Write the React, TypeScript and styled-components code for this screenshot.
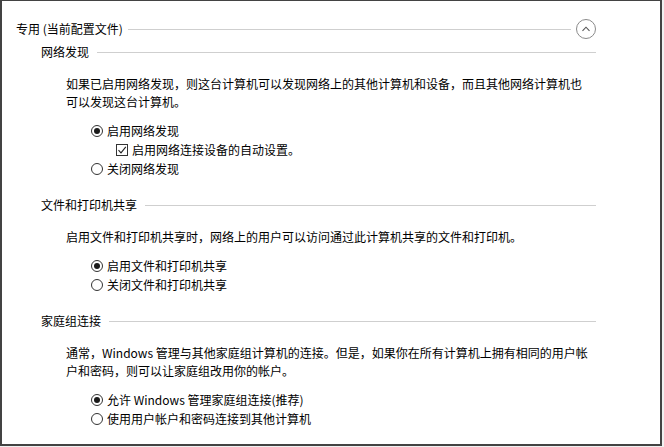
import React from 'react';
import styled, { createGlobalStyle } from 'styled-components';

const GlobalStyle = createGlobalStyle`
  html, body {
    margin: 0;
    padding: 0;
    background: #f0f0f0;
  }
  body {
    font-family: "Noto Sans CJK SC", "Liberation Sans", sans-serif;
    font-size: 12px;
    color: #000;
  }
`;

const Window = styled.div`
  box-sizing: border-box;
  width: 662px;
  height: 446px;
  background: #fff;
  border: 2px solid #434343;
  border-top-width: 1px;
  padding: 18px 0 0 14px;
  overflow: hidden;
`;

const Content = styled.div`
  width: 580px;
  display: flex;
  flex-direction: column;
`;

const TitleRow = styled.div`
  display: flex;
  align-items: center;
  height: 20px;
  line-height: 18px;
  white-space: nowrap;
`;

// horizontal separator that fills the rest of a heading row
const Rule = styled.div<{ $left: number; $right?: number }>`
  flex: 1;
  height: 1px;
  background: #cfcfcf;
  margin-left: ${p => p.$left}px;
  margin-right: ${p => p.$right || 0}px;
`;

const CollapseButton = styled.button`
  box-sizing: border-box;
  width: 20px;
  height: 20px;
  padding: 0;
  border: 1px solid #8a8a8a;
  border-radius: 50%;
  background: #fff;
  display: flex;
  align-items: center;
  justify-content: center;
`;

const Section = styled.div<{ $top: number }>`
  margin-left: 25px;
  margin-top: ${p => p.$top}px;
  display: flex;
  flex-direction: column;
`;

const SectionHeading = styled.div`
  display: flex;
  align-items: center;
  height: 18px;
  line-height: 18px;
  white-space: nowrap;
`;

const Paragraph = styled.p`
  margin: 14px 0 0 25px;
  line-height: 18px;
  white-space: nowrap;
`;

const Options = styled.div`
  margin: 10px 0 0 50px;
  display: flex;
  flex-direction: column;
`;

const OptionRow = styled.label<{ $indent?: number }>`
  display: flex;
  align-items: center;
  gap: 4px;
  height: 19px;
  line-height: 19px;
  margin-left: ${p => p.$indent || 0}px;
  white-space: nowrap;
`;

const RadioCircle = styled.span<{ $checked?: boolean }>`
  box-sizing: border-box;
  width: 12px;
  height: 12px;
  border: 1px solid #333;
  border-radius: 50%;
  background: #fff;
  display: flex;
  align-items: center;
  justify-content: center;
  flex-shrink: 0;

  &::after {
    content: '';
    width: 6px;
    height: 6px;
    border-radius: 50%;
    background: ${p => (p.$checked ? '#1a1a1a' : 'transparent')};
  }
`;

const CheckBox = styled.span`
  box-sizing: border-box;
  width: 12px;
  height: 12px;
  border: 1px solid #333;
  background: #fff;
  display: flex;
  align-items: center;
  justify-content: center;
  flex-shrink: 0;
`;

const Radio = ({ checked, children }: { checked?: boolean; children: React.ReactNode }) => (
  <OptionRow>
    <RadioCircle $checked={checked} />
    <span>{children}</span>
  </OptionRow>
);

const Heading = ({ children }: { children: React.ReactNode }) => (
  <SectionHeading>
    <span>{children}</span>
    <Rule $left={8} />
  </SectionHeading>
);

export default function App() {
  return (
    <>
      <GlobalStyle />
      <Window>
        <Content>
          <TitleRow>
            <span>专用 (当前配置文件)</span>
            <Rule $left={5} $right={5} />
            <CollapseButton aria-label="折叠">
              <svg width="10" height="10" viewBox="0 0 10 10">
                <path d="M1.5 6.8 L5 3.2 L8.5 6.8" fill="none" stroke="#555" strokeWidth="1.1" />
              </svg>
            </CollapseButton>
          </TitleRow>

          <Section $top={4}>
            <Heading>网络发现</Heading>
            <Paragraph>
              如果已启用网络发现，则这台计算机可以发现网络上的其他计算机和设备，而且其他网络计算机也
              <br />
              可以发现这台计算机。
            </Paragraph>
            <Options>
              <Radio checked>启用网络发现</Radio>
              <OptionRow $indent={25}>
                <CheckBox>
                  <svg width="10" height="10" viewBox="0 0 10 10">
                    <path d="M1.5 5.2 L4 7.8 L8.8 1.8" fill="none" stroke="#222" strokeWidth="1.1" />
                  </svg>
                </CheckBox>
                <span>启用网络连接设备的自动设置。</span>
              </OptionRow>
              <Radio>关闭网络发现</Radio>
            </Options>
          </Section>

          <Section $top={18}>
            <Heading>文件和打印机共享</Heading>
            <Paragraph>启用文件和打印机共享时，网络上的用户可以访问通过此计算机共享的文件和打印机。</Paragraph>
            <Options>
              <Radio checked>启用文件和打印机共享</Radio>
              <Radio>关闭文件和打印机共享</Radio>
            </Options>
          </Section>

          <Section $top={18}>
            <Heading>家庭组连接</Heading>
            <Paragraph>
              通常，Windows 管理与其他家庭组计算机的连接。但是，如果你在所有计算机上拥有相同的用户帐
              <br />
              户和密码，则可以让家庭组改用你的帐户。
            </Paragraph>
            <Options>
              <Radio checked>允许 Windows 管理家庭组连接(推荐)</Radio>
              <Radio>使用用户帐户和密码连接到其他计算机</Radio>
            </Options>
          </Section>
        </Content>
      </Window>
    </>
  );
}
